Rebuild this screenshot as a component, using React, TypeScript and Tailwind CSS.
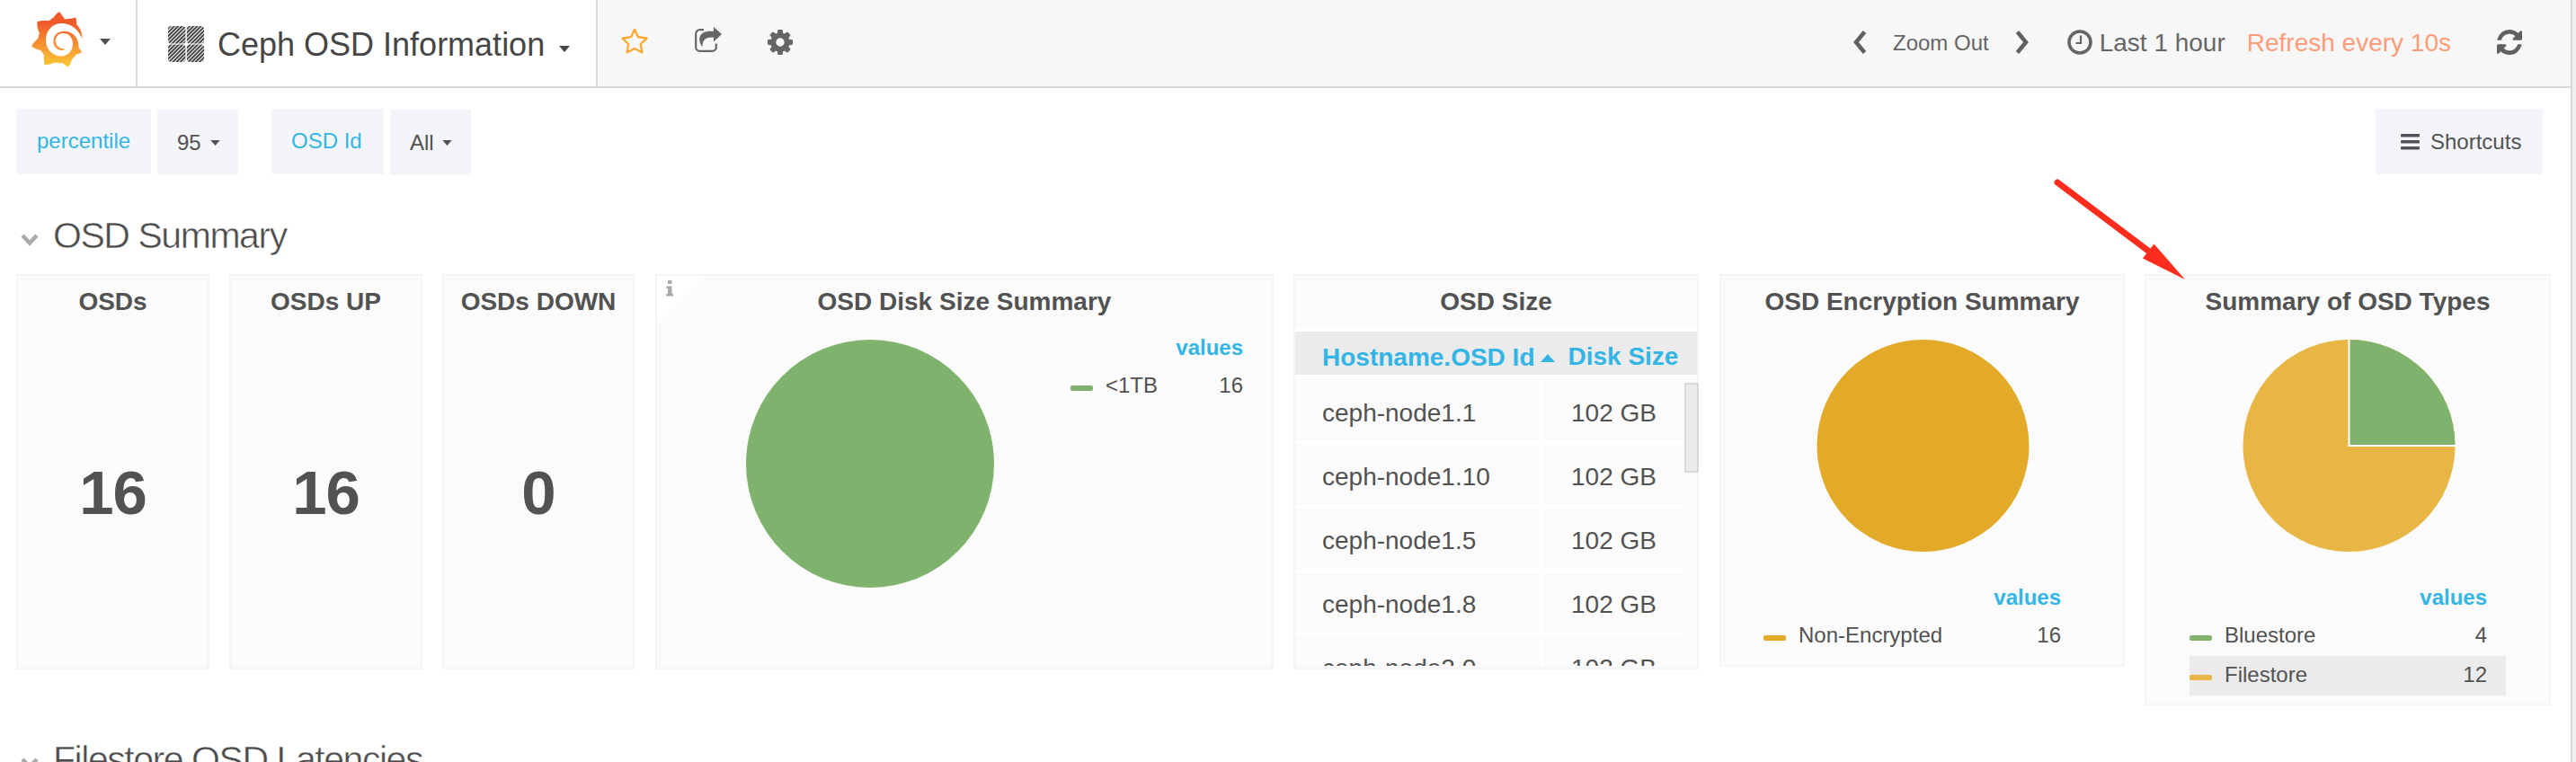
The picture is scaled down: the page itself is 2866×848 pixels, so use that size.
import React from "react";

const T = "flex items-center whitespace-nowrap leading-none";

function Caret({ className = "" }: { className?: string }) {
  return (
    <svg viewBox="0 0 12 7" className={className} fill="currentColor">
      <path d="M0 0h12L6 7z" />
    </svg>
  );
}

function Logo() {
  return (
    <svg viewBox="0 0 57 62" className="h-[62px] w-[57px]">
      <defs>
        <linearGradient id="flame" x1="0" y1="1" x2="0" y2="0">
          <stop offset="0" stopColor="#fbca33" />
          <stop offset="0.3" stopColor="#f7a035" />
          <stop offset="0.8" stopColor="#f05a2b" />
          <stop offset="1" stopColor="#f05a2b" />
        </linearGradient>
      </defs>
      <path
        fill="url(#flame)"
        d="M31 0C33 3 35 5 37 8.500C41 8 45 7.500 49.500 6.500C50 10 50 12 50.500 14.500C54 18 56.500 23 56.500 30C55 27 53 23 50 20C45 14.500 38 12.500 32 13C22 14 16 22 16 32C16 42 24 49.500 33 49.500C41 49.500 46 43 46 36C46 29 42 24 35.500 24C29.500 24 26 29 27 34.500C28 39 33 42 38 41C36 43.500 31 43.500 28 41C23 37 24 29 27 25.500C32 20 42 21 47 25.500C51 29 53 35 52.500 40C54 42 55.500 43.500 56 45.500C53.500 46.500 51.500 47 49.500 48C47 51.500 46 52 45 53C44 56 43 59 41 61.500C38 60 36.500 58.500 34.500 57C31 57.500 28 57 25.500 56.500C22 58.500 18.500 59 14.500 59C14 55 13.500 52 14 48C12 45.500 11 44 10 43C6.500 42 3 40.500 0 38.500C2 34.500 5 32 7.500 29.500C7.500 27 8.500 25 9 24C6.500 19.500 6 15 6.500 11C11 9.500 15 10 19.500 10C21 9 23 7.500 24.500 6.500C26.500 3 29 1.500 31 0Z"
      />
    </svg>
  );
}

function DashboardIcon() {
  return (
    <svg viewBox="0 0 40 40" className="mt-[-1px] h-10 w-10">
      <defs>
        <pattern id="stripes" width="3" height="3" patternUnits="userSpaceOnUse" patternTransform="rotate(45)">
          <rect width="3" height="3" fill="#464646" />
          <rect width="1" height="3" fill="#fff" />
        </pattern>
      </defs>
      <g fill="url(#stripes)">
        <rect width="19.400" height="19.400" rx="3.500" />
        <rect x="20.800" width="19.200" height="19.400" rx="3.500" />
        <rect y="20.600" width="19.400" height="19.400" rx="3.500" />
        <rect x="20.800" y="20.600" width="19.200" height="19.400" rx="3.500" />
      </g>
    </svg>
  );
}

function StarIcon() {
  return (
    <svg viewBox="0 0 30 29" className="mt-px h-[29px] w-[30px]" fill="none" stroke="#ffa52a" strokeWidth="2.200" strokeLinejoin="round">
      <path d="M15 1.800L19 10.200 28.600 11.600 21.700 18.200 23.400 27.400 15 23 6.600 27.400 8.300 18.200 1.400 11.600 11 10.200z" />
    </svg>
  );
}

function GearIcon() {
  return (
    <svg viewBox="0 128 1536 1536" className="ml-[51px] mt-[3px] h-[28px] w-[28px]" fill="#666">
      <path d="M1024 896q0-106-75-181t-181-75-181 75-75 181 75 181 181 75 181-75 75-181zm512-109v222q0 12-8 23t-20 13l-185 28q-19 54-39 91 35 50 107 138 10 12 10 25t-9 23q-27 37-99 108t-94 71q-12 0-26-9l-138-108q-44 23-91 38-16 136-29 186-7 28-36 28h-222q-14 0-24.500-8.500t-11.500-21.500l-28-184q-49-16-90-37l-141 107q-10 9-25 9-14 0-25-11-126-114-165-168-7-10-7-23 0-12 8-23 15-21 51-66.500t54-70.500q-27-50-41-99l-183-27q-13-2-21-12.500t-8-23.500v-222q0-12 8-23t19-13l186-28q14-46 39-92-40-57-107-138-10-12-10-24 0-10 9-23 26-36 98.500-107.500t94.500-71.500q13 0 26 10l138 107q44-23 91-38 16-136 29-186 7-28 36-28h222q14 0 24.500 8.500t11.500 21.500l28 184q49 16 90 37l142-107q9-9 24-9 13 0 25 10 129 119 165 170 7 8 7 22 0 12-8 23-15 21-51 66.500t-54 70.500q26 50 41 98l183 28q13 2 21 12.500t8 23.500z" />
    </svg>
  );
}

function ShareIcon() {
  return (
    <svg viewBox="0 0 30 28" className="h-7 w-[30px]">
      <path d="M10 3.200H5.500A4.300 4.300 0 0 0 1.200 7.500v15a4.300 4.300 0 0 0 4.300 4.300h14a4.300 4.300 0 0 0 4.300-4.300v-4" fill="none" stroke="#666" strokeWidth="2.200" />
      <path d="M21 0l9 8-9 8.500v-4.800h-3.500c-5 0-9.200 2.300-9 10.800C2.500 14 4.500 4.800 17 4.800h4z" fill="#666" />
    </svg>
  );
}

function RefreshIcon() {
  return (
    <svg viewBox="0 0 1536 1536" className="h-[28px] w-[28px]" fill="#606060">
      <path d="M1511 928q0 5-1 7-64 268-268 434.500t-478 166.500q-146 0-282.500-55t-243.500-157l-129 129q-19 19-45 19t-45-19-19-45v-448q0-26 19-45t45-19h448q26 0 45 19t19 45-19 45l-137 137q71 66 161 102t187 36q134 0 250-65t186-179q11-17 53-117 8-23 30-23h192q13 0 22.500 9.500t9.500 22.500zM1536 128v448q0 26-19 45t-45 19h-448q-26 0-45-19t-19-45 19-45l138-138q-148-137-349-137-134 0-250 65t-186 179q-11 17-53 117-8 23-30 23h-199q-13 0-22.500-9.500t-9.500-22.500v-7q65-268 270-434.500t480-166.500q146 0 284 55.500t245 156.500l130-129q19-19 45-19t45 19 19 45z" />
    </svg>
  );
}

function Panel({ title, className, children }: { title: string; className: string; children?: React.ReactNode }) {
  return (
    <section className={`relative flex shrink-0 flex-col border-2 border-[#f4f5fa] bg-[#fbfbfb] ${className}`}>
      <h2 className="h-[58px] shrink-0 pt-[11px] text-center text-[28px] font-bold leading-[36px] whitespace-nowrap">{title}</h2>
      {children}
    </section>
  );
}

function Stat({ title, value, className }: { title: string; value: string; className: string }) {
  return (
    <Panel title={title} className={`h-[440px] ${className}`}>
      <div className="pt-[144px] text-center text-[69px] font-bold leading-[80px] tracking-[-1px]">{value}</div>
    </Panel>
  );
}

type Row = { label: string; value: string; swatch: string; active?: boolean };

function Legend({ rows, className }: { rows: Row[]; className: string }) {
  return (
    <div className={`text-2xl ${className}`}>
      <div className="flex h-[43px] items-center justify-end pr-[21px] font-bold text-[#33b5e5]">values</div>
      {rows.map((r) => (
        <div key={r.label} className={`flex h-[44px] items-center pr-[21px] ${r.active ? "bg-[#ebebeb]" : ""}`}>
          <span className={`mt-[4px] h-[6px] w-[25px] rounded-[2px] ${r.swatch}`} />
          <span className="ml-[14px] flex-1 pb-[3px]">{r.label}</span>
          <span className="pb-[3px]">{r.value}</span>
        </div>
      ))}
    </div>
  );
}

const disks = ["ceph-node1.1", "ceph-node1.10", "ceph-node1.5", "ceph-node1.8", "ceph-node2.0"];

function SectionTitle({ children }: { children: React.ReactNode }) {
  return (
    <div className="flex h-[48px] items-center pl-[23px]">
      <svg viewBox="0 0 20 14" className="mt-[9px] h-[14px] w-[20px]">
        <path d="M2 2l8 8.500 8-8.500" fill="none" stroke="#aaa" strokeWidth="4.500" />
      </svg>
      <span className="ml-[16px] whitespace-nowrap text-[41px] leading-[48px] tracking-[-1.45px] text-[#4c4c4c] [-webkit-text-stroke:0.5px_white]">{children}</span>
    </div>
  );
}

export default function App() {
  return (
    <div className="relative flex h-[848px] w-[2866px] overflow-hidden bg-white font-['Liberation_Sans',Arial,sans-serif] text-[#525252]">
      <div className="flex w-[2860px] shrink-0 flex-col">
        <header className="flex h-[98px] shrink-0 border-b-2 border-[#d8d8d8] bg-[#f7f7f7]">
          <div className="flex w-[153px] border-r-2 border-[#d8d8d8] bg-white pl-[35px] pt-[13px]">
            <Logo />
            <Caret className="ml-[19px] mt-[30px] h-[7px] w-[12px] text-[#525252]" />
          </div>
          <div className="flex w-[512px] items-start border-r-2 border-[#d8d8d8] bg-white pl-[34px] pt-[30px] text-[#464646]">
            <DashboardIcon />
            <span className="ml-[15px] whitespace-nowrap text-[36px] leading-[40px]">Ceph OSD Information</span>
            <Caret className="ml-[16px] mt-[21px] h-[7px] w-[12px]" />
          </div>
          <div className="flex items-start pl-[26px] pt-[30px]">
            <StarIcon />
            <div className="ml-[52px]"><ShareIcon /></div>
            <GearIcon />
          </div>
          <div className="ml-auto flex h-[94px] items-center text-[#666]">
            <svg viewBox="0 0 16 26" className="h-[26px] w-[16px]"><path d="M13.500 1.500L4 13l9.500 11.500" fill="none" stroke="#606060" strokeWidth="4.500" /></svg>
            <span className="ml-[29px] mt-[1px] text-2xl">Zoom Out</span>
            <svg viewBox="0 0 16 26" className="ml-[29px] h-[26px] w-[16px]"><path d="M2.500 1.500L12 13 2.500 24.500" fill="none" stroke="#606060" strokeWidth="4.500" /></svg>
            <svg viewBox="0 0 28 28" className="ml-[42px] h-[28px] w-[28px]" fill="none" stroke="#666"><circle cx="14" cy="14" r="12" strokeWidth="3.600" /><path d="M15 6.500V15H9.500" strokeWidth="2.200" /></svg>
            <span className="ml-[8px] mt-[2px] text-[28px]">Last 1 hour</span>
            <span className="ml-[24px] mt-[2px] text-[28px] text-[#ff9c7a]">Refresh every 10s</span>
            <div className="ml-[51px] mr-[54px]"><RefreshIcon /></div>
          </div>
        </header>

        <div className="mt-[23px] flex h-[74px] items-start pl-[18px] pr-[31px] text-2xl">
          <div className={`${T} h-[73px] w-[150px] rounded-l-[3px] bg-[#f4f5fa] pb-[2px] pl-[23px] text-[#33b5e5]`}>percentile</div>
          <div className={`${T} ml-[7px] mt-[1px] h-[73px] w-[90px] rounded-l-[3px] bg-[#f4f5fa] pl-[22px]`}>95<Caret className="ml-[10px] h-[6px] w-[11px]" /></div>
          <div className={`${T} ml-[37px] h-[73px] w-[125px] rounded-l-[3px] bg-[#f4f5fa] pb-[2px] pl-[22px] text-[#33b5e5]`}>OSD Id</div>
          <div className={`${T} ml-[7px] mt-[1px] h-[73px] w-[90px] rounded-l-[3px] bg-[#f4f5fa] pl-[22px]`}>All<Caret className="ml-[9px] h-[6px] w-[11px]" /></div>
          <div className={`${T} ml-auto h-[73px] w-[186px] rounded-l-[3px] bg-[#f4f5fa] pl-[28px]`}>
            <svg viewBox="0 0 21 18" className="mr-[12px] h-[18px] w-[21px]" fill="#525252"><rect width="21" height="3.600" rx="1" /><rect y="7" width="21" height="3.600" rx="1" /><rect y="14" width="21" height="3.600" rx="1" /></svg>
            Shortcuts
          </div>
        </div>

        <div className="mt-[43px]"><SectionTitle>OSD Summary</SectionTitle></div>

        <div className="mt-[19px] flex h-[480px] shrink-0 items-start gap-[22px] pl-[18px]">
          <Stat title="OSDs" value="16" className="w-[215px]" />
          <Stat title="OSDs UP" value="16" className="w-[215px]" />
          <Stat title="OSDs DOWN" value="0" className="mr-px w-[214px]" />

          <Panel title="OSD Disk Size Summary" className="h-[440px] w-[688px]">
            <svg viewBox="0 0 54 54" className="absolute left-0 top-0 h-[54px] w-[54px]">
              <path d="M0 0h54L0 54z" fill="#fff" />
              <path d="M12 5h4.500v4H12zM10.500 11.500h6V20H18v2.500h-8V20h2v-6h-1.500z" fill="#aaa" />
            </svg>
            <div className="flex items-start pl-[99px] pt-[13px]">
              <svg viewBox="0 0 276 276" className="h-[276px] w-[276px]"><circle cx="138" cy="138" r="138" fill="#7eb26d" /></svg>
              <Legend className="ml-[85px] mt-[-13px] w-[213px]" rows={[{ label: "<1TB", value: "16", swatch: "bg-[#7eb26d]" }]} />
            </div>
          </Panel>

          <Panel title="OSD Size" className="mr-px h-[440px] w-[451px]">
            <div className="flex h-[56px] shrink-0 items-center border-y-4 border-white bg-[#ebebeb] pl-[30px] text-[28px] font-bold text-[#33b5e5]">
              <span className="mt-[9px] whitespace-nowrap">Hostname.OSD Id</span>
              <svg viewBox="0 0 16 9" className="ml-[7px] mt-[11px] h-[9px] w-[16px]" fill="#33b5e5"><path d="M0 9h16L8 0z" /></svg>
              <span className="ml-[14px] mt-[7px] whitespace-nowrap">Disk Size</span>
            </div>
            <div className="mt-[3px] flex h-[317px] items-start overflow-hidden text-[28px]">
              <div className="w-[431px] shrink-0">
                {disks.map((d) => (
                  <div key={d} className="flex h-[71px] border-b-4 border-white">
                    <div className="flex w-[276px] items-center border-r-4 border-white pl-[30px] pt-[5px]">{d}</div>
                    <div className="flex items-center pl-[31px] pt-[5px]">102 GB</div>
                  </div>
                ))}
              </div>
            </div>
            <div className="absolute right-[-2px] top-[119px] h-[100px] w-[16px] border-2 border-[#d8d8d8] bg-[#ebebeb]" />
          </Panel>

          <Panel title="OSD Encryption Summary" className="h-[437px] w-[451px]">
            <svg viewBox="0 0 237 237" className="ml-[106px] mt-[13px] h-[237px] w-[237px] shrink-0"><circle cx="118.500" cy="118" r="118" fill="#e3aa29" /></svg>
            <Legend className="ml-[47px] mt-[28px] w-[352px]" rows={[{ label: "Non-Encrypted", value: "16", swatch: "bg-[#e3aa29]" }]} />
          </Panel>

          <Panel title="Summary of OSD Types" className="h-[480px] w-[452px]">
            <svg viewBox="0 0 237 237" className="ml-[107px] mt-[13px] h-[237px] w-[237px] shrink-0">
              <circle cx="118.500" cy="118" r="118" fill="#e8b645" />
              <path d="M118.500 118V0a118 118 0 0 1 118 118z" fill="#7eb26d" />
              <path d="M118.500 0v118H237" fill="none" stroke="#fff" strokeWidth="2" />
            </svg>
            <Legend
              className="ml-[48px] mt-[28px] w-[352px]"
              rows={[
                { label: "Bluestore", value: "4", swatch: "bg-[#7eb26d]" },
                { label: "Filestore", value: "12", swatch: "bg-[#e8b645]", active: true },
              ]}
            />
          </Panel>
        </div>

        <div className="mt-[36px] shrink-0"><SectionTitle>Filestore OSD Latencies</SectionTitle></div>
      </div>
      <div className="w-[6px] shrink-0 border-l-2 border-[#d8d8d8] bg-[#efefef]" />

      <svg viewBox="0 0 150 120" className="absolute left-[2284px] top-[195px] h-[120px] w-[150px]">
        <path d="M5 8L110 87" stroke="#fe2c1c" strokeWidth="7" strokeLinecap="round" />
        <path d="M112.500 76.500L147 116 100 92.500z" fill="#fe2c1c" />
      </svg>
    </div>
  );
}
